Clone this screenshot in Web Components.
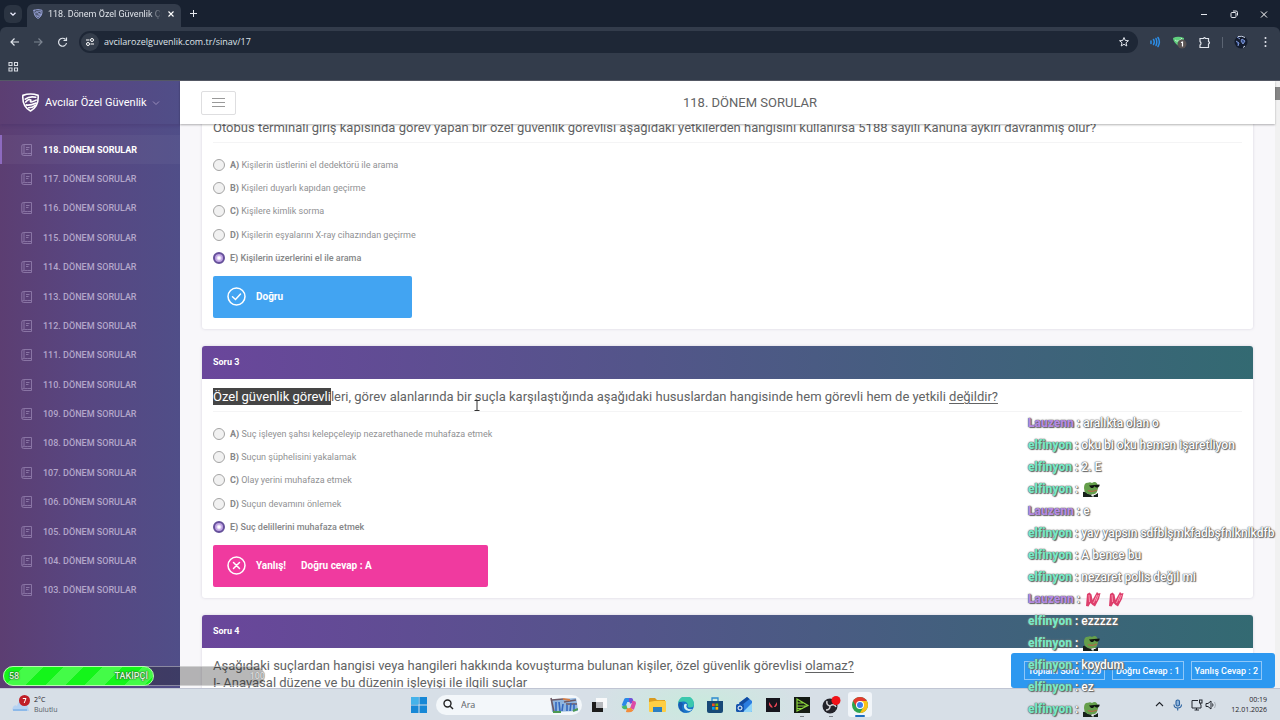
<!DOCTYPE html>
<html lang="tr">
<head>
<meta charset="utf-8">
<title>118. Dönem Özel Güvenlik Çıkmış Sorular</title>
<style>
  html, body { margin: 0; height: 100%; }
  body { font-family: Roboto, "Liberation Sans", sans-serif; color: #626364; overflow: hidden; }
  u { text-underline-offset: 2px; }
  mark { background: #454545; color: #fff; padding: 1px 0; }
</style>
</head>
<body>
<desk-screen>
  <browser-chrome slot="chrome"></browser-chrome>
  <side-nav slot="side"></side-nav>
  <top-bar slot="top">118. DÖNEM SORULAR</top-bar>

  <question-card>
    <span slot="question">Otobüs terminali giriş kapısında görev yapan bir özel güvenlik görevlisi aşağıdaki yetkilerden hangisini kullanırsa 5188 sayılı Kanuna aykırı davranmış olur?</span>
    <answer-option key="A">Kişilerin üstlerini el dedektörü ile arama</answer-option>
    <answer-option key="B">Kişileri duyarlı kapıdan geçirme</answer-option>
    <answer-option key="C">Kişilere kimlik sorma</answer-option>
    <answer-option key="D">Kişilerin eşyalarını X-ray cihazından geçirme</answer-option>
    <answer-option key="E" checked>Kişilerin üzerlerini el ile arama</answer-option>
    <result-note slot="result" kind="right"><span>Doğru</span></result-note>
  </question-card>

  <question-card heading="Soru 3">
    <span slot="question"><mark>Özel güvenlik görevli</mark>leri, görev alanlarında bir suçla karşılaştığında aşağıdaki hususlardan hangisinde hem görevli hem de yetkili <u>değildir?</u></span>
    <answer-option key="A">Suç işleyen şahsı kelepçeleyip nezarethanede muhafaza etmek</answer-option>
    <answer-option key="B">Suçun şüphelisini yakalamak</answer-option>
    <answer-option key="C">Olay yerini muhafaza etmek</answer-option>
    <answer-option key="D">Suçun devamını önlemek</answer-option>
    <answer-option key="E" checked>Suç delillerini muhafaza etmek</answer-option>
    <result-note slot="result" kind="wrong"><span>Yanlış!</span><span>Doğru cevap : A</span></result-note>
  </question-card>

  <question-card heading="Soru 4">
    <span slot="question">Aşağıdaki suçlardan hangisi veya hangileri hakkında kovuşturma bulunan kişiler, özel güvenlik görevlisi <u>olamaz?</u><br>I- Anayasal düzene ve bu düzenin işleyişi ile ilgili suçlar</span>
  </question-card>

  <score-box slot="score"></score-box>
  <goal-bar slot="overlay"></goal-bar>
  <text-cursor slot="overlay"></text-cursor>
  <chat-feed slot="overlay">
    <chat-line who="Lauzenn">aralıkta olan o</chat-line>
    <chat-line who="elfinyon">oku bi oku hemen işaretliyon</chat-line>
    <chat-line who="elfinyon">2. E</chat-line>
    <chat-line who="elfinyon"><emote-frog></emote-frog></chat-line>
    <chat-line who="Lauzenn">e</chat-line>
    <chat-line who="elfinyon">yav yapsın sdfblşmkfadbşfnlknlkdfb</chat-line>
    <chat-line who="elfinyon">A bence bu</chat-line>
    <chat-line who="elfinyon">nezaret polis değil mi</chat-line>
    <chat-line who="Lauzenn"><emote-hands></emote-hands><emote-hands></emote-hands></chat-line>
    <chat-line who="elfinyon">ezzzzz</chat-line>
    <chat-line who="elfinyon"><emote-frog></emote-frog></chat-line>
    <chat-line who="elfinyon">koydum</chat-line>
    <chat-line who="elfinyon">ez</chat-line>
    <chat-line who="elfinyon"><emote-frog></emote-frog></chat-line>
  </chat-feed>
  <task-bar slot="taskbar"></task-bar>
</desk-screen>

<script>
const define = (name, css, html, setup) => {
  const tpl = document.createElement('template');
  tpl.innerHTML = `<style>*{box-sizing:border-box}svg{display:block;flex:none}button,input{font:inherit;color:inherit;margin:0}button{border:0;background:none;padding:0;display:grid;place-items:center}a{color:inherit;text-decoration:none}${css}</style>${html}`;
  customElements.define(name, class extends HTMLElement {
    constructor() {
      super();
      this.attachShadow({ mode: 'open' }).append(tpl.content.cloneNode(true));
    }
    connectedCallback() { if (setup) setup(this, this.shadowRoot); }
  });
};

const shield = (size, color) => `<svg width="${size}" height="${size}" viewBox="0 0 20 20" fill="none" stroke="${color}" stroke-width="1.7" stroke-linejoin="round" stroke-linecap="round"><path d="M2 2.5Q10-.5 18 2.5Q19 14 10 19Q1 14 2 2.5Z"/><path d="M4.5 6.5Q9 3 15.500 4.500M5 9.500Q8 5.500 10.500 7.500Q8 11.500 16 7.500M5.500 12.500Q9 13.500 16 10.500M8 15.500Q12 15.500 15 13"/></svg>`;

define('desk-screen', `
  :host{display:flex;flex-direction:column;height:100vh;position:relative;overflow:hidden}
  .page{flex:1;min-height:0;display:flex;background:#f8f7fa;position:relative}
  .main{flex:1;min-width:0;display:flex;flex-direction:column}
  .view{flex:1;min-height:0;overflow:hidden;padding:0 22px;background:#f8f7fa}
  .cards{display:flex;flex-direction:column;gap:17px;margin-top:-14px}
  .bar{width:5px;background:#f1f1f1;padding-top:6px}
  .thumb{height:13px;background:#868686}
  .score{position:absolute;right:5px;bottom:0}`,
  `<slot name="chrome"></slot>
   <div class="page">
     <slot name="side"></slot>
     <div class="main"><slot name="top"></slot><div class="view"><div class="cards"><slot></slot></div></div></div>
     <div class="bar"><div class="thumb"></div></div>
     <div class="score"><slot name="score"></slot></div>
   </div>
   <slot name="taskbar"></slot><slot name="overlay"></slot>`);

define('browser-chrome', `
  :host{display:block;background:#182130;color:#dfe3e9;font-family:"Open Sans","Noto Sans",sans-serif;font-size:9px;border-bottom:1px solid #565a66}
  .tabs{display:flex;align-items:center;height:27px;padding:0 10px 0 4px}
  .down{width:18px;height:18px;border-radius:6px;background:#2b3442}
  .tab{display:flex;align-items:center;gap:5px;height:23px;align-self:flex-end;margin-left:5px;width:154px;padding:0 6px 3px;border-radius:6px 6px 0 0;background:#333c4b}
  .title{flex:1;white-space:nowrap;overflow:hidden;font-family:Roboto,sans-serif;font-size:9px;-webkit-mask:linear-gradient(90deg,#000 88%,transparent);mask:linear-gradient(90deg,#000 88%,transparent)}
  .add{margin-left:8px}
  .win{margin-left:auto;display:flex;gap:18px}
  .tools{display:flex;align-items:center;height:30px;background:#333c4b;padding:0 9px 0 8px;border-radius:6px 6px 0 0}
  .nav{display:flex;gap:11px;margin-right:10px}
  .addr{flex:1;display:flex;align-items:center;gap:5px;height:22px;border-radius:11px;background:#1e2736;padding:0 8px 0 2px}
  .site{width:18px;height:18px;border-radius:9px;background:#343d4b}
  .addr input{flex:1;min-width:0;border:0;background:none;outline:0;padding:0 0 1px;font-size:9px}
  .ext{display:flex;align-items:center;gap:11px;margin-left:9px}
  .sep{width:1px;height:11px;background:#5b6472}
  .marks{display:flex;align-items:center;height:23px;background:#333c4b;padding:0 7px 3px}`,
  `<div class="tabs">
    <button class="down" aria-label="Sekme ara"><svg width="8" height="8" viewBox="0 0 8 8" fill="none" stroke="#eef" stroke-width="1.3"><path d="M1.500 2.700L4 5.200L6.500 2.700"/></svg></button>
    <div class="tab">${shield(10, '#a9b4f0')}<span class="title">118. Dönem Özel Güvenlik Çıkm</span>
      <button aria-label="Sekmeyi kapat"><svg width="8" height="8" viewBox="0 0 8 8" stroke="#fff" stroke-width="1.100"><path d="M1.500 1.500L6.500 6.500M6.500 1.500L1.500 6.500"/></svg></button></div>
    <button class="add" aria-label="Yeni sekme"><svg width="9" height="9" viewBox="0 0 9 9" stroke="#e5e8ee"><path d="M1 4.500H8M4.500 1V8"/></svg></button>
    <div class="win">
      <button aria-label="Küçült"><svg width="12" height="12" viewBox="0 0 12 12" stroke="#e5e8ee"><path d="M3 6.500H9"/></svg></button>
      <button aria-label="Geri yükle"><svg width="12" height="12" viewBox="0 0 12 12" fill="none" stroke="#e5e8ee"><rect x="3" y="4.500" width="5" height="5" rx="1"/><path d="M5 3H8Q9.500 3 9.500 4.500V7.500"/></svg></button>
      <button aria-label="Kapat"><svg width="12" height="12" viewBox="0 0 12 12" stroke="#fff"><path d="M3 3.500L9 9.500M9 3.500L3 9.500"/></svg></button>
    </div>
  </div>
  <div class="tools">
    <div class="nav">
      <button aria-label="Geri"><svg width="13" height="12" viewBox="0 0 13 12" fill="none" stroke="#e1e5ec" stroke-width="1.200"><path d="M11 6H3M6.500 2.500L3 6L6.500 9.500"/></svg></button>
      <button aria-label="İleri"><svg width="13" height="12" viewBox="0 0 13 12" fill="none" stroke="#7d8591" stroke-width="1.200"><path d="M2 6H10M6.500 2.500L10 6L6.500 9.500"/></svg></button>
      <button aria-label="Yenile"><svg width="13" height="12" viewBox="0 0 13 12" fill="none" stroke="#e1e5ec" stroke-width="1.200"><path d="M9.500 3.500A4 4 0 1 0 10.500 7M10.500 1.500V4.500H7.500"/></svg></button>
    </div>
    <div class="addr">
      <button class="site" aria-label="Site bilgileri"><svg width="10" height="10" viewBox="0 0 10 10" fill="none" stroke="#fff"><path d="M1 3H4.500M5.500 7H9"/><circle cx="7" cy="3" r="1.500"/><circle cx="3" cy="7" r="1.500"/></svg></button>
      <input aria-label="Adres" value="avcilarozelguvenlik.com.tr/sinav/17">
      <button aria-label="Yer işareti"><svg width="12" height="12" viewBox="0 0 12 12" fill="none" stroke="#e1e5ec"><path d="M6 1.500L7.300 4.500L10.500 4.700L8 6.800L8.800 10L6 8.300L3.200 10L4 6.800L1.500 4.700L4.700 4.500Z"/></svg></button>
    </div>
    <div class="ext">
      <svg width="14" height="12" viewBox="0 0 14 12" fill="none" stroke="#2c8ee8" stroke-width="1.500" stroke-linecap="round"><path d="M4 5V7.500M6.500 3.500Q8 6 6.500 8.500M9 2.500Q10.500 6 9 9.500M11 1.500Q13.800 6 11 10.500"/></svg>
      <svg width="15" height="14" viewBox="0 0 15 14"><path d="M1 3Q6 .5 12 3Q12 9 6.500 11Q1 7 1 3Z" fill="#5fcf7d"/><path d="M3 5Q6 8 10 3" stroke="#c9f3d3" fill="none"/><circle cx="10" cy="9" r="4.500" fill="#5a5353"/><path d="M9 7.500L10.500 7V11.500" stroke="#fff" stroke-width="1.200" fill="none"/></svg>
      <svg width="13" height="13" viewBox="0 0 13 13" fill="none" stroke="#e1e5ec" stroke-width="1.200"><path d="M2 2.500H5.500Q6.500 .8 7.500 2.500H10.500V5.500Q12.500 6.800 10.500 8V11.500H2V9Q4 7.200 2 5.500Z"/></svg>
      <span class="sep"></span>
      <svg width="14" height="14" viewBox="0 0 14 14"><circle cx="7" cy="7" r="6.500" fill="#141c2e"/><path d="M3 2L6 4M2 6L5 8L4 11M8 4L11 6L9 9L7 6Z" stroke="#7f97d6" fill="#36508d"/><path d="M4 1.500Q8 .5 11 2.500M11 11L9 12.500" stroke="#cfd8e8" fill="none"/></svg>
      <svg width="12" height="12" viewBox="0 0 12 12" fill="#e6e9ef"><circle cx="6.500" cy="2" r="1"/><circle cx="6.500" cy="6" r="1"/><circle cx="6.500" cy="10" r="1"/></svg>
    </div>
  </div>
  <div class="marks"><button aria-label="Uygulamalar"><svg width="12" height="12" viewBox="0 0 12 12" fill="none" stroke="#d6dae2" stroke-width="1.100"><path d="M2 1.500h3v3h-3zM7.500 1.500h3v3h-3zM2 7h3v3h-3zM7.500 7h3v3h-3z"/></svg></button></div>`);

define('side-nav', `
  :host{display:block;width:180px;flex:none;background:linear-gradient(90deg,#5c3e72 0%,#584681 45%,#504e88 100%);color:#fff}
  .brand{display:flex;align-items:center;height:43px;padding-left:21px;gap:5px;font-size:11px;box-shadow:0 2px 3px rgba(60,40,100,.25)}
  nav{display:grid;grid-auto-rows:1fr;height:470px;margin-top:11px;font-size:9px;font-weight:500}
  a{display:flex;align-items:center;gap:10px;padding-left:19px;border-left:2px solid transparent;color:#b3a6ca}
  a svg{opacity:.45}
  a.on{color:#fff;font-weight:700;background:rgba(255,255,255,.04);border-left-color:#8d6abf}`,
  `<div class="brand">${shield(19, '#fff')}<span>Avcılar Özel Güvenlik</span><svg width="8" height="8" viewBox="0 0 8 8" fill="none" stroke="#9a8dbb"><path d="M1 2.500L4 5.500L7 2.500"/></svg></div><nav></nav>`,
  (el, root) => {
    const nav = root.querySelector('nav');
    for (let n = 118; n > 102; n--) {
      nav.insertAdjacentHTML('beforeend', `<a href="#${n}" class="${n === 118 ? 'on' : ''}"><svg width="12" height="12" viewBox="0 0 12 12" fill="none" stroke="#c3b4dc"><path d="M2.500 .5H10.500V11.500H2.500Q.8 11.500 .8 9.800V2Q.8 .5 2.500 .5ZM3 .5V9.500M.8 10Q1 9.500 10.500 9.500M5 3.500H8.500M5 5.500H7.500"/></svg>${n}. DÖNEM SORULAR</a>`);
    }
  });

define('top-bar', `
  :host{display:flex;align-items:center;height:43px;flex:none;background:#fff;padding:0 11px 0 21px;box-shadow:0 1px 2px rgba(0,0,0,.3);position:relative;z-index:1}
  button{width:35px;height:24px;border:1px solid #dedee0;border-radius:2px}
  h1{flex:1;margin:0;text-align:center;font-size:13px;font-weight:400}`,
  `<button aria-label="Menü"><svg width="13" height="9" viewBox="0 0 13 9" stroke="#999"><path d="M0 .5H13M0 4.500H13M0 8.500H13"/></svg></button><h1><slot></slot></h1>`);

define('question-card', `
  :host{display:block;background:#fff;border-radius:3px;box-shadow:0 0 3px rgba(70,60,100,.18)}
  h2{margin:0;height:33px;display:flex;align-items:center;padding:0 11px 2px;color:#fff;font-size:9px;font-weight:700;border-radius:3px 3px 0 0;background:linear-gradient(90deg,#6a469b,#336a72)}
  h2:empty{display:none}
  .body{padding:9px 11px 11px}
  p{margin:0;font-size:13px;line-height:17px}
  hr{margin:6px 0 0;border:0;height:1px;background:#f4f4f5}
  .answers{width:fit-content;margin-top:10px}
  .list{display:grid;grid-auto-rows:1fr;height:117px;margin-bottom:6px}`,
  `<h2></h2><div class="body"><p><slot name="question"></slot></p><hr><div class="answers"><div class="list"><slot></slot></div><slot name="result"></slot></div></div>`,
  (el, root) => { root.querySelector('h2').textContent = el.getAttribute('heading') || ''; });

define('answer-option', `
  :host{display:block;font-size:9px;color:#909193}
  label{display:flex;align-items:center;gap:5px;height:100%}
  input{appearance:none;width:12px;height:12px;border:1px solid #a4a4a4;border-radius:50%;background:#f1f1f1;flex:none}
  input:checked{border:2px solid #65509a;background:radial-gradient(circle,#fff 0 1px,#bfa2e4 3px)}
  b{font-weight:700;color:#858688}
  :host([checked]) label{font-weight:500;color:#858688}`,
  `<label><input type="radio"><span><b></b> <slot></slot></span></label>`,
  (el, root) => {
    root.querySelector('b').textContent = el.getAttribute('key') + ')';
    root.querySelector('input').checked = el.hasAttribute('checked');
  });

define('result-note', `
  :host{display:flex;align-items:center;height:42px;padding:0 0 2px 14px;margin-right:4px;box-sizing:border-box;gap:10px;border-radius:2px;color:#fff;font-size:10px;font-weight:700;background:#42a4f2}
  :host([kind=wrong]){background:#f03a9f}
  .text{display:flex;gap:15px}
  .no,:host([kind=wrong]) .ok{display:none}
  :host([kind=wrong]) .no{display:block}`,
  `<svg width="19" height="19" viewBox="0 0 19 19" fill="none" stroke="#fff" stroke-width="1.500" stroke-linecap="round"><circle cx="9.500" cy="9.500" r="8.500"/><path class="ok" d="M5.500 9.800L8.500 12.500L13.500 7"/><path class="no" d="M6.500 6.500L12.500 12.500M12.500 6.500L6.500 12.500"/></svg><div class="text"><slot></slot></div>`);

define('score-box', `
  :host{display:flex;gap:7px;padding:8px 13px;border-radius:3px;background:#2d98f0;color:#fff;font-size:9px;font-weight:500}
  span{height:19px;display:flex;align-items:center;padding:0 3px;border:1px solid #8fc7f8;white-space:nowrap}`,
  `<span>Toplam Soru : 120</span><span>Doğru Cevap : 1</span><span>Yanlış Cevap : 2</span>`);

define('goal-bar', `
  :host{position:absolute;left:3px;bottom:34px;width:262px;height:20px;box-sizing:border-box;display:flex;border-radius:10px;background:rgba(20,20,20,.3);color:#dcffda;font-size:9px;font-weight:500;border:1px solid rgba(255,255,255,.4);border-right:0;text-shadow:0 0 2px #333,0 0 1px #333}
  .fill{width:151px;margin:-1px;display:flex;justify-content:space-between;align-items:center;padding:0 5px;border-radius:10px;border:1px solid #b6ffae;background:repeating-linear-gradient(135deg,#14f51a 0 14px,#44fb48 14px 28px)}
  .max{margin-left:auto;align-self:center;color:#dcdcdc;text-shadow:0 0 1px #777}`,
  `<div class="fill"><span>58</span><span>TAKİPÇİ</span></div><span class="max">100</span>`);

define('text-cursor', `:host{position:absolute;left:473px;top:400px}`,
  `<svg width="8" height="11" viewBox="0 0 8 11" fill="none" stroke="#333"><path d="M1.500 .5H6.500M4 .5V10.500M1.500 10.500H6.500"/></svg>`);

define('chat-feed', `:host{position:absolute;left:1028px;bottom:0;display:flex;flex-direction:column;z-index:3}`, `<slot></slot>`);

define('chat-line', `
  :host{display:flex;align-items:center;gap:3px;height:22px;font-size:12px;font-weight:700;color:#fff;white-space:nowrap;text-shadow:0 0 1px #555,0 0 1px #666,1px 1px 1px #666,0 0 2px #999}
  b{color:#79e8c6}
  :host([who=Lauzenn]) b{color:#b58ae0}
  .msg{display:flex;gap:3px;font-size:12px;font-weight:500}`,
  `<b></b><span>:</span><span class="msg"><slot></slot></span>`,
  (el, root) => { root.querySelector('b').textContent = el.getAttribute('who'); });

define('emote-frog', `:host{display:block;margin-left:2px}`,
  `<svg width="17" height="16" viewBox="0 0 17 16"><path d="M0 11Q3 10 5 13L12 14L15 12V16H0Z" fill="#17201b"/><path d="M1 7Q1 1.500 5 1.800Q7 .5 9 2Q12 0 14 2.500Q16 6 14.500 9Q14 13.500 8 13.500Q1 13 1 7Z" fill="#659f4b"/><path d="M6 4.500L16.500 3.500V5L15 6.500H13L11.500 5.300L10 7H8Z" fill="#101510"/><path d="M5 9.500Q9 11.500 14 9" stroke="#b06a48" stroke-width="1.300" fill="none"/><path d="M8 14L10.500 13L11 15.500L9 15.500Z" fill="#e7ece5"/></svg>`);

define('emote-hands', `:host{display:block;margin:0 2px}`,
  `<svg width="16" height="16" viewBox="0 0 16 16"><path d="M1 15L2 3L4.500 1.500L6.500 3.500L7.500 9L12 1L13.500 2.500L15.500 2L14 8L10 15.500L7.500 14L5.500 12L3.500 15.500Z" fill="#dd3f6c"/><path d="M4 4L4.500 11M12 4L8.500 12M13.500 4L11 10" stroke="#ff9db5" stroke-width=".9" fill="none"/></svg>`);

define('task-bar', `
  :host{display:grid;box-sizing:border-box;grid-template-columns:1fr auto 1fr;align-items:center;height:32px;flex:none;padding:0 13px 0 12px;border-top:1px solid #c0c5d3;background:radial-gradient(ellipse 110px 40px at 700px 50%,#c9eadd,transparent),#d7dfe7;color:#1f2329;font-family:"Open Sans","Noto Sans",sans-serif;font-size:7px;position:relative}
  .weather{display:flex;gap:4px;align-items:center;line-height:10px}
  .weather small{display:block;font-size:7px;color:#555c66}
  .mid{display:flex;gap:5px;align-items:center}
  .mid button{width:24px;height:25px;border-radius:3px;position:relative}
  .mid .on{background:#f1f5f9}
  .run::after{content:"";position:absolute;bottom:0;left:10px;width:4px;height:1px;background:#7b8088}
  .on::after{content:"";position:absolute;bottom:0;left:7px;width:10px;height:2px;border-radius:1px;background:#1e6fc0}
  .find{display:flex;align-items:center;gap:7px;width:146px;height:20px;border-radius:10px;background:#f3f7fa;padding:0 4px 0 7px}
  .find input{flex:1;min-width:0;border:0;outline:0;padding:0;background:none;font-size:9px}
  .find input::placeholder{color:#5b5f66;opacity:1}
  .tray{display:flex;justify-content:flex-end;align-items:center;gap:8px;text-align:right;line-height:10px}
  .tray .snd{margin-left:-6px}
  .clock{margin-left:6px}`,
  `<div class="weather"><svg width="18" height="20" viewBox="0 0 18 20"><path d="M3 16Q-1 16 1 12Q3 9 5 11Q7 4 12 7Q16 9 17 16Z" fill="#b5d2f2"/><path d="M1 15H15" stroke="#7fb0e6" stroke-width="1.500"/><circle cx="12.500" cy="5.500" r="5.500" fill="#c01f28"/><path d="M10.800 3.500H14L12.200 8" stroke="#fff" fill="none"/></svg><div>2°C<small>Bulutlu</small></div></div>
  <div class="mid">
    <button aria-label="Başlat"><svg width="16" height="16" viewBox="0 0 16 16"><path d="M0 0h7.500v7.500H0zM8.500 0H16v7.500H8.500zM0 8.500h7.500V16H0zM8.500 8.500H16V16H8.500z" fill="#1788d6"/><path d="M0 0h7.500v7.500H0z" fill="#45b3ea"/></svg></button>
    <label class="find"><svg width="11" height="11" viewBox="0 0 11 11" fill="none" stroke="#222" stroke-width="1.400"><circle cx="4.500" cy="4.500" r="3.500"/><path d="M7.200 7.200L10 10"/></svg><input type="search" placeholder="Ara" aria-label="Ara">
      <svg width="28" height="16" viewBox="0 0 28 16"><path d="M1 3L26 1L27 6L28 14L2 15Z" fill="#8fb5df"/><path d="M1 1L4 15M2 3L13 2M14 5L26 3M16 7H27" stroke="#6d5a66" stroke-width="1.600"/><path d="M6 5V15M9 5L10 14M13 7L12 14M17 8V14M21 6L20 14M24 7V13" stroke="#3468c0" stroke-width="1.600"/><path d="M3 15H11M23 14L28 12" stroke="#4d9a53" stroke-width="2"/><path d="M13 2L20 3" stroke="#d27d47" stroke-width="2"/></svg></label>
    <button aria-label="Görev görünümü"><svg width="16" height="16" viewBox="0 0 16 16"><path d="M5 1H16V11H5z" fill="#f8f9fa"/><path d="M1 5H12V15H1z" fill="#1c1c1c"/><path d="M5 5H12V11H5z" fill="#b5b8bc"/></svg></button>
    <button aria-label="Copilot"><svg width="17" height="16" viewBox="0 0 17 16" fill="none" stroke-width="4" stroke-linejoin="round"><path d="M9 3L6 3L3.500 9" stroke="#2a88e8"/><path d="M3.500 9Q4 11 7 10" stroke="#45b96b"/><path d="M9 3L11 3L12 6" stroke="#7050d8"/><path d="M12 6L14 6L12 12" stroke="#dc4aa6"/><path d="M12 12Q10 14 6.500 13" stroke="#f38d3c"/></svg></button>
    <button aria-label="Dosya Gezgini"><svg width="17" height="16" viewBox="0 0 17 16"><path d="M0 2Q0 1 1 1H6L8 3H16V8H0Z" fill="#d99b20"/><path d="M0 5Q8 3 17 4V14Q17 15 16 15H1Q0 15 0 14Z" fill="#fdce45"/><path d="M4 10H13V15H4z" fill="#2c80c2"/></svg></button>
    <button aria-label="Edge"><svg width="16" height="16" viewBox="0 0 16 16"><circle cx="8" cy="8" r="8" fill="#1975c9"/><path d="M0 7A8 8 0 0 1 16 7Q16 11 11 10.500Q9 10 10 8Q9 4 5 4.500Q1 5 0 7Z" fill="#3bc8ad"/><path d="M6 8Q5 13 11 14Q13 14 14.500 12Q11 13 9 11Q7.500 9 9 7.500Q7 6 6 8Z" fill="#d9f1f4"/><path d="M1 5Q-1 13 7 16Q2 12 5 7Q3 4 1 5Z" fill="#1a5cae"/></svg></button>
    <button aria-label="Microsoft Store"><svg width="16" height="16" viewBox="0 0 16 16"><path d="M5 4V1H11V4" fill="none" stroke="#2e8bd0" stroke-width="1.300"/><path d="M0 4H16V14Q16 16 14 16H2Q0 16 0 14Z" fill="#174a77"/><path d="M5 6.500h2.700v2.700H5z" fill="#f25022"/><path d="M8.500 6.500h2.700v2.700H8.500z" fill="#7fba00"/><path d="M5 10h2.700v2.700H5z" fill="#00a4ef"/><path d="M8.500 10h2.700v2.700H8.500z" fill="#ffb900"/></svg></button>
    <button aria-label="Outlook"><svg width="17" height="16" viewBox="0 0 17 16"><path d="M3 6L11 0L16 4V14Q16 15 15 15H4Z" fill="#2b7de0"/><path d="M3 6L11 0L13.500 2L6 8Z" fill="#124b9f"/><path d="M7 15L16 6V14Q16 15 15 15Z" fill="#8fd4f9"/><rect y="7" width="8" height="8" rx="1.500" fill="#1655ad"/><circle cx="4" cy="11" r="2" fill="none" stroke="#fff"/></svg></button>
    <button aria-label="Valorant"><svg width="14" height="14" viewBox="0 0 14 14"><path d="M0 0H14V14H0z" fill="#17151d"/><path d="M3 4L7 9.500H5L3 7ZM11 4V7L9.500 9H7.800Z" fill="#ee4655"/></svg></button>
    <button class="run" aria-label="Oyun"><svg width="16" height="16" viewBox="0 0 16 16"><path d="M0 0H16V16H0z" fill="#141a14"/><path d="M3 2L14 8.500L3 14Z M3 6H9M3 9H13M3 11.500H9" fill="none" stroke="#8bd53c" stroke-width="1.200"/></svg></button>
    <button class="run" aria-label="OBS"><svg width="19" height="18" viewBox="0 0 19 18"><circle cx="8" cy="10" r="7.500" fill="#23232a"/><path d="M8 10Q4 9 5 5M8 10Q12 7 14 11M8 10Q8 14 4 14" stroke="#d3d3d6" stroke-width="1.500" fill="none"/><circle cx="14" cy="4.500" r="4.500" fill="#f01218"/></svg></button>
    <button class="on" aria-label="Chrome"><svg width="16" height="16" viewBox="0 0 16 16"><circle cx="8" cy="8" r="8" fill="#2da44e"/><path d="M1.100 4A8 8 0 0 1 14.900 4H8L4.500 10Z" fill="#e33b2e"/><path d="M14.900 4A8 8 0 0 1 8 16L11.500 10L8 4Z" fill="#fbc116"/><circle cx="8" cy="8" r="4" fill="#fff"/><circle cx="8" cy="8" r="3" fill="#3b7ded"/></svg></button>
  </div>
  <div class="tray">
    <svg width="9" height="9" viewBox="0 0 9 9" fill="none" stroke="#1f2329" stroke-width="1.100"><path d="M1 6L4.500 2.500L8 6"/></svg>
    <svg width="11" height="12" viewBox="0 0 11 12" fill="none" stroke="#2b62a0" stroke-width="1.100"><rect x="4" y="1" width="3.500" height="6" rx="1.700" fill="#8eb4dc"/><path d="M2 5.500Q2 9 5.700 9Q9.500 9 9.500 5.500M5.700 9V11.500"/></svg>
    <svg width="12" height="12" viewBox="0 0 12 12" fill="none" stroke="#23272e"><path d="M7 1.500H1V9H10V6M3.500 11H8M5.500 9V11"/><rect x="8.500" y="1" width="2.500" height="3" /><path d="M9.700 4V6"/></svg>
    <svg class="snd" width="12" height="12" viewBox="0 0 12 12" fill="none" stroke="#23272e"><path d="M1 4.500H3L6 2V10L3 7.500H1Z"/><path d="M7.500 4.500Q8.500 6 7.500 7.500"/><path d="M9.500 3Q11.500 6 9.500 9" stroke="#a9b0b8"/></svg>
    <div class="clock">00:19<br>12.01.2026</div>
  </div>`);
</script>
</body>
</html>
